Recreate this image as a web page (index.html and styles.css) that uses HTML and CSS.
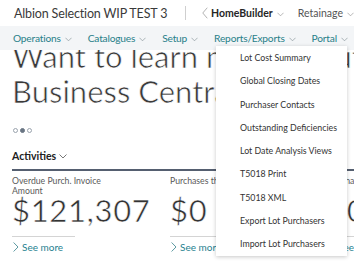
FILE: index.html
```html
<!DOCTYPE html>
<html lang="en">
<head>
  <meta charset="UTF-8">
  <title>Albion Selection WIP TEST 3</title>
  <link rel="stylesheet" href="styles.css">
</head>
<body>
  <div class="app-header">
    <span class="company">Albion Selection WIP TEST 3</span>
    <span class="divider"></span>
    <svg class="back" viewBox="0 0 6 12"><path d="M5.5 0.5 L0.8 6 L5.5 11.5" /></svg>
    <span class="role">HomeBuilder</span>
    <svg class="chev" viewBox="0 0 8 5"><path d="M0.5 0.5 L4 4 L7.5 0.5" /></svg>
    <span class="role-link">Retainage</span>
    <svg class="chev" viewBox="0 0 8 5"><path d="M0.5 0.5 L4 4 L7.5 0.5" /></svg>
  </div>

  <nav class="menu-bar">
    <span class="menu-item">Operations <svg class="chev" viewBox="0 0 8 5"><path d="M0.5 0.5 L4 4 L7.5 0.5" /></svg></span>
    <span class="menu-item">Catalogues <svg class="chev" viewBox="0 0 8 5"><path d="M0.5 0.5 L4 4 L7.5 0.5" /></svg></span>
    <span class="menu-item">Setup <svg class="chev" viewBox="0 0 8 5"><path d="M0.5 0.5 L4 4 L7.5 0.5" /></svg></span>
    <span class="menu-item">Reports/Exports <svg class="chev" viewBox="0 0 8 5"><path d="M0.5 0.5 L4 4 L7.5 0.5" /></svg></span>
    <span class="menu-item">Portal <svg class="chev" viewBox="0 0 8 5"><path d="M0.5 0.5 L4 4 L7.5 0.5" /></svg></span>
  </nav>

  <main class="content">
    <div class="hero">
      <div class="hero-line">Want to learn more about</div>
      <div class="hero-line">Business Central?</div>
    </div>
    <div class="dots">
      <span class="dot"></span>
      <span class="dot active"></span>
      <span class="dot"></span>
    </div>

    <div class="section-title">Activities <svg class="chev" viewBox="0 0 8 5"><path d="M0.5 0.5 L4 4 L7.5 0.5" /></svg></div>

    <div class="tiles">
      <div class="tile">
        <div class="tile-label">Overdue Purch. Invoice Amount</div>
        <div class="tile-value">$121,307</div>
        <div class="tile-link"><svg class="arrow" viewBox="0 0 6 10"><path d="M0.6 0.5 L5 5 L0.6 9.5" /></svg>See more</div>
      </div>
      <div class="tile">
        <div class="tile-label">Purchases this Month</div>
        <div class="tile-value">$0</div>
        <div class="tile-link"><svg class="arrow" viewBox="0 0 6 10"><path d="M0.6 0.5 L5 5 L0.6 9.5" /></svg>See more</div>
      </div>
      <div class="tile">
        <div class="tile-label">Purchases Due</div>
        <div class="tile-value">$0</div>
        <div class="tile-link"><svg class="arrow" viewBox="0 0 6 10"><path d="M0.6 0.5 L5 5 L0.6 9.5" /></svg>See more</div>
      </div>
    </div>
  </main>

  <ul class="dropdown">
    <li>Lot Cost Summary</li>
    <li>Global Closing Dates</li>
    <li>Purchaser Contacts</li>
    <li>Outstanding Deficiencies</li>
    <li>Lot Date Analysis Views</li>
    <li>T5018 Print</li>
    <li>T5018 XML</li>
    <li>Export Lot Purchasers</li>
    <li>Import Lot Purchasers</li>
  </ul>
</body>
</html>
```

FILE: styles.css
```css
body {
  margin: 0;
  width: 354px;
  height: 264px;
  overflow: hidden;
  font-family: Lato, 'Open Sans', sans-serif;
  background: #fff;
  color: #212121;
  position: relative;
}

.chev {
  width: 7px;
  height: 5px;
  flex-shrink: 0;
  fill: none;
  stroke: currentColor;
  stroke-width: 0.8;
}

.app-header {
  height: 26px;
  display: flex;
  align-items: center;
  padding: 0 0 0 14px;
  white-space: nowrap;
  color: #333;
}

.company {
  font-size: 12.5px;
  color: #3a3a3a;
  letter-spacing: -0.15px;
}

.divider {
  width: 1px;
  height: 14px;
  background: #cfcfcf;
  margin: 0 16px 0 18px;
}

.back {
  width: 6px;
  height: 12px;
  fill: none;
  stroke: #9a9a9a;
  stroke-width: 0.8;
  margin-right: 3px;
}

.role {
  font-size: 10.5px;
  font-weight: 700;
  color: #262626;
}

.app-header .chev {
  color: #999;
  margin: 2px 14px 0 4px;
}

.app-header .chev:last-child {
  margin-right: 0;
}

.role-link {
  font-size: 10.5px;
  color: #555;
}

.menu-bar {
  height: 24px;
  display: flex;
  align-items: center;
  gap: 16px;
  padding: 0 0 0 13px;
  background: #f3f5f7;
  position: relative;
  z-index: 2;
  white-space: nowrap;
}

.menu-item {
  font-size: 10.2px;
  letter-spacing: -0.2px;
  color: #287f89;
  display: flex;
  align-items: center;
  gap: 4px;
}

.menu-item .chev {
  color: #8a979c;
  margin-top: 2px;
}

.content {
  height: 214px;
  overflow: hidden;
  padding: 0 12px;
}

.hero {
  margin-top: -11.5px;
  white-space: nowrap;
}

.hero-line {
  font-size: 31px;
  line-height: 35px;
  color: #3a3a3a;
  -webkit-text-stroke: 0.7px #fff;
}

.dots {
  display: flex;
  gap: 2px;
  margin: 19px 0 0 1px;
}

.dot {
  width: 3px;
  height: 3px;
  border: 1px solid #9aa3ad;
  border-radius: 50%;
}

.dot.active {
  background: #6a7684;
  border-color: #6a7684;
}

.section-title {
  margin-top: 16px;
  font-size: 10.5px;
  line-height: 14px;
  font-weight: 700;
  color: #212121;
  padding-bottom: 6px;
  border-bottom: 2px solid #555f70;
  display: flex;
  align-items: center;
  gap: 3px;
  width: 400px;
}

.section-title .chev {
  width: 8px;
  color: #555;
  margin-top: 1px;
}

.tiles {
  display: flex;
  gap: 95px;
  margin-top: 5px;
}

.tile {
  width: 63px;
  flex-shrink: 0;
}

.tile-label {
  font-size: 8.7px;
  line-height: 10px;
  color: #5a5a5a;
  width: 100px;
  height: 20px;
}

.tile-value {
  font-size: 31px;
  line-height: 28px;
  letter-spacing: 0.7px;
  color: #333;
  -webkit-text-stroke: 0.6px #fff;
  padding-bottom: 12px;
  border-bottom: 1px solid #d4d4d4;
  white-space: nowrap;
}

.tile-link {
  margin-top: 4px;
  font-size: 10px;
  line-height: 12px;
  color: #1f8290;
  display: flex;
  align-items: center;
  white-space: nowrap;
}

.arrow {
  width: 6px;
  height: 10px;
  fill: none;
  stroke: #4a8d96;
  stroke-width: 0.9;
  margin: 0 3px 0 1px;
}

.dropdown {
  position: absolute;
  left: 216px;
  top: 46px;
  width: 131px;
  margin: 0;
  padding: 0;
  list-style: none;
  background: #fff;
  box-shadow: 0 1px 4px rgba(0, 0, 0, 0.22);
  z-index: 5;
}

.dropdown li {
  height: 23.3px;
  line-height: 23.3px;
  padding-left: 24px;
  font-size: 8.8px;
  color: #333;
  white-space: nowrap;
}
```
